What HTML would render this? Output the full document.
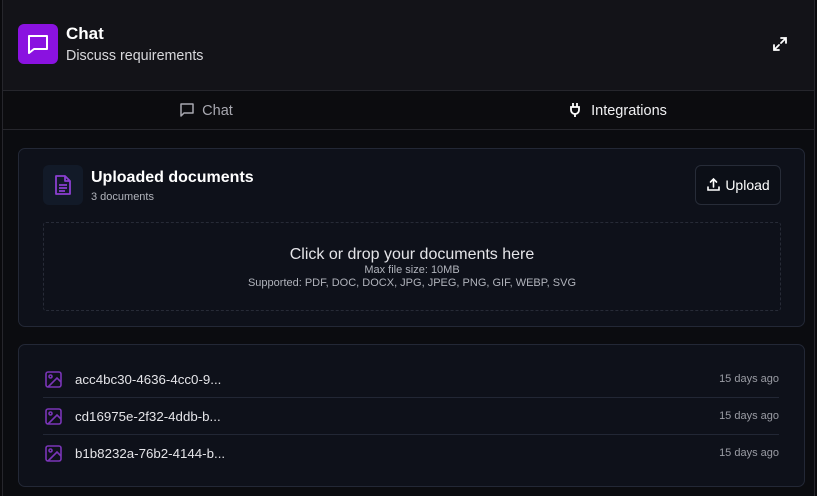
<!DOCTYPE html>
<html><head><style>
*{box-sizing:border-box;margin:0;padding:0}
body{width:817px;height:496px;background:#0a0a0d;font-family:"Liberation Sans",sans-serif;color:#e8e8ec;position:relative;overflow:hidden}
.frame{position:absolute;left:2px;top:0;width:813px;height:496px;border-left:1px solid #26262c;border-right:1px solid #26262c;background:#0b0c10}
.hdr{position:absolute;left:0;top:0;width:811px;height:91px;background:#131318;border-bottom:1px solid #26262c}
.logo{position:absolute;left:15px;top:24px;width:40px;height:40px;border-radius:6px;background:#8a12e0}
.t1{position:absolute;left:63px;top:24px;font-size:17px;font-weight:bold;color:#fff}
.t2{position:absolute;left:63px;top:48px;font-size:14.3px;color:#d8d8dc}
.tabs{position:absolute;left:0;top:92px;width:811px;height:38px;background:#0c0c0f;border-bottom:1px solid #26262c}
.tab{position:absolute;top:0;height:38px;line-height:38px;font-size:14.5px}
.card{position:absolute;left:15px;width:787px;background:#0e111a;border:1px solid #232836;border-radius:7px}
.sub{font-size:11px;color:#b0b3bb}
.row{position:absolute;left:24px;right:25px;height:37px;font-size:13.3px;color:#e4e4e8}
.row .n{position:absolute;left:32px;top:11px}
.row .d{position:absolute;right:0;top:12px;font-size:11px;color:#9a9ca4}
.row svg{position:absolute;left:2px;top:10px}
</style></head><body>
<div class="frame">
<div class="hdr">
 <div class="logo"><svg width="40" height="40" viewBox="0 0 40 40"><path d="M11 12h18v13H16l-5 4z" fill="none" stroke="#fff" stroke-width="2" stroke-linejoin="round"/></svg></div>
 <div class="t1">Chat</div>
 <div class="t2">Discuss requirements</div>
 <svg style="position:absolute;left:768px;top:35px" width="18" height="18" viewBox="0 0 18 18" fill="none" stroke="#fff" stroke-width="1.8" stroke-linecap="round"><path d="M10 3h5v5M15 3l-5 5M8 15H3v-5M3 15l5-5"/></svg>
</div>
<div class="tabs">
 <div class="tab" style="left:0;width:406px;text-align:center;color:#a8a8b0"><svg width="16" height="16" viewBox="0 0 16 16" style="vertical-align:-3px;margin-right:7px" fill="none" stroke="#a8a8b0" stroke-width="1.5"><path d="M2 2h12v9H5l-3 3z" stroke-linejoin="round"/></svg>Chat</div>
 <div class="tab" style="left:412px;width:405px;text-align:center;color:#f0f0f2"><svg width="14" height="16" viewBox="0 0 14 16" style="vertical-align:-3px;margin-right:9px" fill="none" stroke="#fff" stroke-width="1.8"><path d="M5 1v4M9 1v4M3 5h8v3a4 4 0 0 1-8 0zM7 12v3"/></svg>Integrations</div>
</div>
<div class="card" style="top:148px;height:179px">
 <div style="position:absolute;left:24px;top:16px;width:40px;height:40px;border-radius:6px;background:#121a28"><svg style="position:absolute;left:11px;top:9px" width="18" height="22" viewBox="0 0 18 22" fill="none" stroke="#8b3fd0" stroke-width="1.8" stroke-linejoin="round"><path d="M2 2h9l5 5v13H2zM11 2v5h5M5 11h8M5 14h8M5 17h6"/></svg></div>
 <div style="position:absolute;left:72px;top:20px;font-size:16px;font-weight:bold;color:#fff">Uploaded documents</div>
 <div class="sub" style="position:absolute;left:72px;top:42px">3 documents</div>
 <div style="position:absolute;left:676px;top:16px;width:86px;height:40px;border:1px solid #272c38;border-radius:6px;background:#0c0f17;font-size:14px;line-height:38px;color:#fff;text-align:center"><svg width="15" height="15" viewBox="0 0 15 15" style="vertical-align:-2px;margin-right:4px" fill="none" stroke="#fff" stroke-width="1.6" stroke-linecap="round"><path d="M7.5 10V2M4.5 5l3-3 3 3M2 10v3h11v-3"/></svg>Upload</div>
 <div style="position:absolute;left:24px;top:73px;width:738px;height:89px;border:1px dashed #272b37;border-radius:3px;text-align:center">
  <div style="margin-top:23px;font-size:16px;color:#e4e4e8">Click or drop your documents here</div>
  <div class="sub" style="line-height:13px">Max file size: 10MB</div>
  <div class="sub" style="line-height:13px">Supported: PDF, DOC, DOCX, JPG, JPEG, PNG, GIF, WEBP, SVG</div>
 </div>
</div>
<div class="card" style="top:344px;height:143px">
 <div class="row" style="top:16px;border-bottom:1px solid #222735"><svg width="17" height="17" viewBox="0 0 17 17" fill="none" stroke="#7a35b8" stroke-width="1.6"><rect x="1" y="1" width="15" height="15" rx="2"/><circle cx="5.5" cy="5.5" r="1.5"/><path d="M16 11l-4-4-9 9"/></svg><span class="n">acc4bc30-4636-4cc0-9...</span><span class="d">15 days ago</span></div>
 <div class="row" style="top:53px;border-bottom:1px solid #222735"><svg width="17" height="17" viewBox="0 0 17 17" fill="none" stroke="#7a35b8" stroke-width="1.6"><rect x="1" y="1" width="15" height="15" rx="2"/><circle cx="5.5" cy="5.5" r="1.5"/><path d="M16 11l-4-4-9 9"/></svg><span class="n">cd16975e-2f32-4ddb-b...</span><span class="d">15 days ago</span></div>
 <div class="row" style="top:90px"><svg width="17" height="17" viewBox="0 0 17 17" fill="none" stroke="#7a35b8" stroke-width="1.6"><rect x="1" y="1" width="15" height="15" rx="2"/><circle cx="5.5" cy="5.5" r="1.5"/><path d="M16 11l-4-4-9 9"/></svg><span class="n">b1b8232a-76b2-4144-b...</span><span class="d">15 days ago</span></div>
</div>
</div>
</body></html>
